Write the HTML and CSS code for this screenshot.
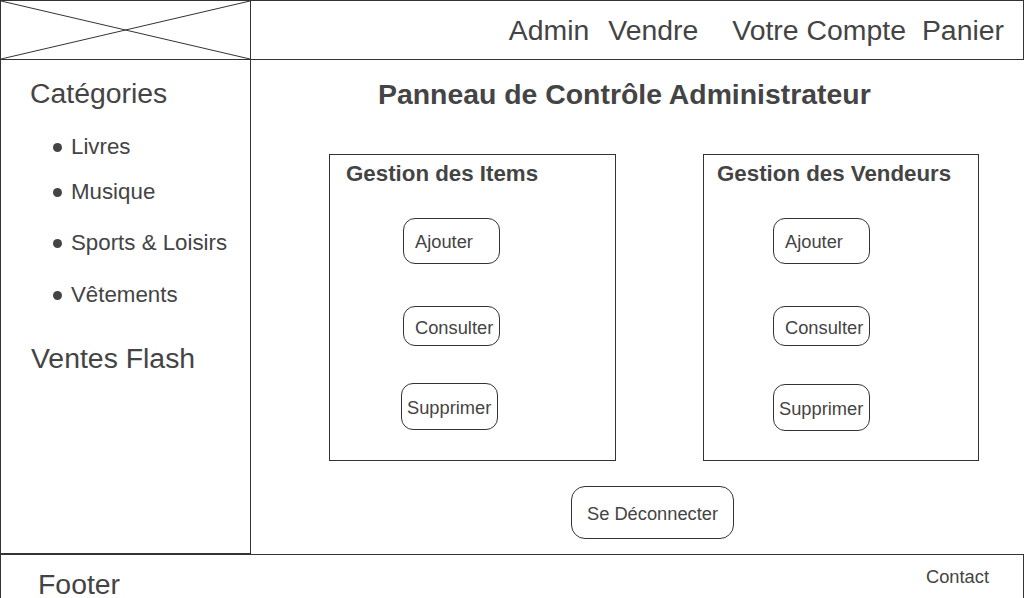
FILE: index.html
```html
<!DOCTYPE html>
<html lang="fr">
<head>
    <meta charset="UTF-8">
    <meta name="viewport" content="width=device-width, initial-scale=1.0">
    <title>Panneau de Contrôle Administrateur</title>

    <link rel="stylesheet" href="styles.css">
</head>
<body>

    <header class="header">
        <div class="logo">
            <svg width="249" height="58" viewBox="0 0 249 58" preserveAspectRatio="none">
                <line x1="0" y1="0" x2="249" y2="58" stroke="#333" stroke-width="1"/>
                <line x1="0" y1="58" x2="249" y2="0" stroke="#333" stroke-width="1"/>
            </svg>
        </div>
        <nav class="nav">
            <a href="#" class="nav-admin">Admin</a>
            <a href="#" class="nav-sell">Vendre</a>
            <a href="#" class="nav-account">Votre Compte</a>
            <a href="#" class="nav-cart">Panier</a>
        </nav>
    </header>

    <div class="middle">
        <aside class="sidebar">
            <h3>Catégories</h3>
            <ul class="cat-list">
                <li><span class="dot"></span>Livres</li>
                <li><span class="dot"></span>Musique</li>
                <li><span class="dot"></span>Sports &amp; Loisirs</li>
                <li><span class="dot"></span>Vêtements</li>
            </ul>
            <h3 class="flash">Ventes Flash</h3>
        </aside>

        <main class="main">
            <h1>Panneau de Contrôle Administrateur</h1>

            <div class="boxes">
                <section class="box box-items">
                    <h2>Gestion des Items</h2>
                    <button class="btn btn-add">Ajouter</button>
                    <button class="btn btn-view">Consulter</button>
                    <button class="btn btn-delete">Supprimer</button>
                </section>
                <section class="box box-sellers">
                    <h2>Gestion des Vendeurs</h2>
                    <button class="btn btn-add">Ajouter</button>
                    <button class="btn btn-view">Consulter</button>
                    <button class="btn btn-delete">Supprimer</button>
                </section>
            </div>

            <button class="btn logout">Se Déconnecter</button>
        </main>
    </div>

    <footer class="footer">
        <span class="footer-title">Footer</span>
        <a href="#" class="contact">Contact</a>
    </footer>

</body>
</html>
```

FILE: styles.css
```css
* {
    box-sizing: border-box;
}

body {
    font-family: "Liberation Sans", Arial, sans-serif;
    color: #444;
    background-color: #fff;
    margin: 0;
    padding: 0;
    overflow: hidden;
}

a {
    color: #444;
    text-decoration: none;
}

/* header */

.header {
    display: flex;
    height: 60px;
    border: 1px solid #333;
}

.logo {
    width: 250px;
    border-right: 1px solid #333;
}

.logo svg {
    display: block;
}

.nav {
    flex: 1;
    display: flex;
    justify-content: flex-end;
    align-items: center;
    padding-right: 19px;
}

.nav a {
    font-size: 28.4px;
    line-height: 32px;
}

.nav-sell {
    margin-left: 19px;
}

.nav-account {
    margin-left: 34px;
}

.nav-cart {
    margin-left: 16px;
}

/* sidebar + main */

.middle {
    display: flex;
    height: 494px;
}

.sidebar {
    width: 251px;
    border-left: 1px solid #333;
    border-right: 1px solid #333;
    border-bottom: 1px solid #333;
    padding: 17px 0 0 29px;
}

.sidebar h3 {
    font-size: 28.4px;
    line-height: 32px;
    font-weight: normal;
    margin: 0;
}

.sidebar .flash {
    margin-top: 34px;
    padding-left: 1px;
}

.cat-list {
    list-style: none;
    margin: 25px 0 0 23px;
    padding: 0;
}

.cat-list li {
    display: flex;
    align-items: center;
    font-size: 22.3px;
    line-height: 26px;
    margin-top: 25px;
}

.cat-list li:first-child {
    margin-top: 0;
}

.cat-list li:nth-child(2) {
    margin-top: 19px;
}

.cat-list li:nth-child(4) {
    margin-top: 26px;
}

.dot {
    width: 9px;
    height: 9px;
    border-radius: 50%;
    background-color: #444;
    margin-right: 9px;
}

.main {
    flex: 1;
    padding-top: 18px;
}

.main h1 {
    font-size: 28.4px;
    line-height: 32px;
    margin: 0 0 0 127px;
}

.boxes {
    display: flex;
    gap: 87px;
    margin: 44px 0 0 78px;
}

.box {
    display: flex;
    flex-direction: column;
    align-items: flex-start;
    height: 307px;
    border: 1px solid #333;
    padding-top: 6px;
}

.box h2 {
    font-size: 22.3px;
    line-height: 26px;
    margin: 0 0 31px 0;
}

.box-items {
    width: 287px;
}

.box-items h2 {
    padding-left: 16px;
}

.box-sellers {
    width: 276px;
}

.box-sellers h2 {
    padding-left: 13px;
}

.btn {
    font-family: "Liberation Sans", Arial, sans-serif;
    font-size: 18.3px;
    color: #444;
    background-color: #fff;
    border: 1px solid #333;
    border-radius: 12px;
    width: 97px;
    padding: 2px 0 0 11px;
    text-align: left;
    cursor: pointer;
}

.btn-add {
    height: 46px;
}

.btn-view {
    height: 40px;
    margin-top: 42px;
    padding-top: 4px;
}

.btn-delete {
    height: 47px;
    margin-top: 37px;
    padding-left: 5px;
}

.box-items .btn {
    margin-left: 73px;
}

.box-items .btn-delete {
    margin-left: 71px;
}

.box-sellers .btn {
    margin-left: 69px;
}

.box-sellers .btn-delete {
    margin-top: 38px;
}

.logout {
    display: block;
    width: 163px;
    height: 53px;
    border-radius: 14px;
    padding: 3px 0 0 0;
    text-align: center;
    margin: 25px 0 0 320px;
}

/* footer */

.footer {
    display: flex;
    justify-content: space-between;
    align-items: flex-start;
    height: 44px;
    border: 1px solid #333;
    border-bottom: none;
    padding: 13px 34px 0 37px;
}

.footer-title {
    font-size: 28.4px;
    line-height: 32px;
}

.contact {
    font-size: 18.3px;
    line-height: 20px;
    margin-top: -1px;
}
```
